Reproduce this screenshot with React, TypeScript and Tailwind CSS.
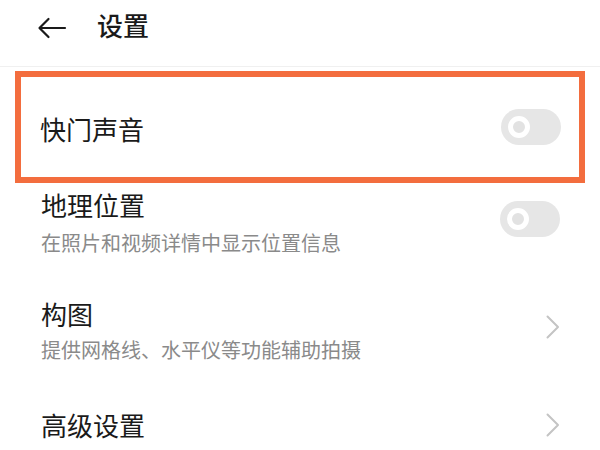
const font = { fontFamily: '"Noto Sans CJK SC", "Noto Sans", sans-serif' };

function Toggle() {
  return (
    <div className="flex h-[36px] w-[60px] shrink-0 items-center rounded-full bg-[#e6e6e6] pl-[7px]">
      <div className="h-[22px] w-[22px] rounded-full border-[5px] border-white bg-[#e2e2e2]" />
    </div>
  );
}

function Chevron() {
  return (
    <svg width="14" height="24" viewBox="0 0 14 24" fill="none" className="shrink-0">
      <path d="M1.5 1.5 L12 12 L1.5 22.5" stroke="#c4c4c4" strokeWidth="2" strokeLinecap="round" strokeLinejoin="round" />
    </svg>
  );
}

export default function App() {
  return (
    <div className="h-[450px] w-[600px] overflow-hidden bg-white text-[#1a1a1a]" style={font}>
      {/* Header */}
      <div className="flex h-[67px] items-start border-b border-[#f0f0f0]">
        <svg width="30" height="22" viewBox="0 0 30 22" fill="none" className="ml-[37px] mt-[17px]">
          <path d="M28 11 H3 M11.5 2 L2.5 11 L11.5 20" stroke="#1a1a1a" strokeWidth="2.2" strokeLinecap="round" strokeLinejoin="round" />
        </svg>
        <h1 className="ml-[30px] mt-[9px] text-[26px] font-medium leading-[32px]">设置</h1>
      </div>

      {/* Highlighted row */}
      <div className="mx-[15px] mt-[4px] flex h-[112px] items-center justify-between border-[6px] border-[#f36d3e] pl-[19px] pr-[18px]">
        <span className="mt-[3px] text-[26px] leading-[32px]">快门声音</span>
        <Toggle />
      </div>

      {/* 地理位置 */}
      <div className="flex items-start justify-between pl-[41px] pr-[40px] pt-[6px]">
        <div>
          <div className="text-[26px] leading-[32px]">地理位置</div>
          <div className="mt-[9px] text-[20px] leading-[26px] text-[#8a8a8a]">在照片和视频详情中显示位置信息</div>
        </div>
        <div className="mt-[12px]">
          <Toggle />
        </div>
      </div>

      {/* 构图 */}
      <div className="mt-[42px] flex items-start justify-between pl-[41px] pr-[40px]">
        <div>
          <div className="text-[26px] leading-[32px]">构图</div>
          <div className="mt-[7px] text-[20px] leading-[26px] text-[#8a8a8a]">提供网格线、水平仪等功能辅助拍摄</div>
        </div>
        <div className="mt-[17px]">
          <Chevron />
        </div>
      </div>

      {/* 高级设置 */}
      <div className="mt-[46px] flex items-start justify-between pl-[41px] pr-[40px]">
        <div className="text-[26px] leading-[32px]">高级设置</div>
        <div className="mt-[4px]">
          <Chevron />
        </div>
      </div>
    </div>
  );
}
